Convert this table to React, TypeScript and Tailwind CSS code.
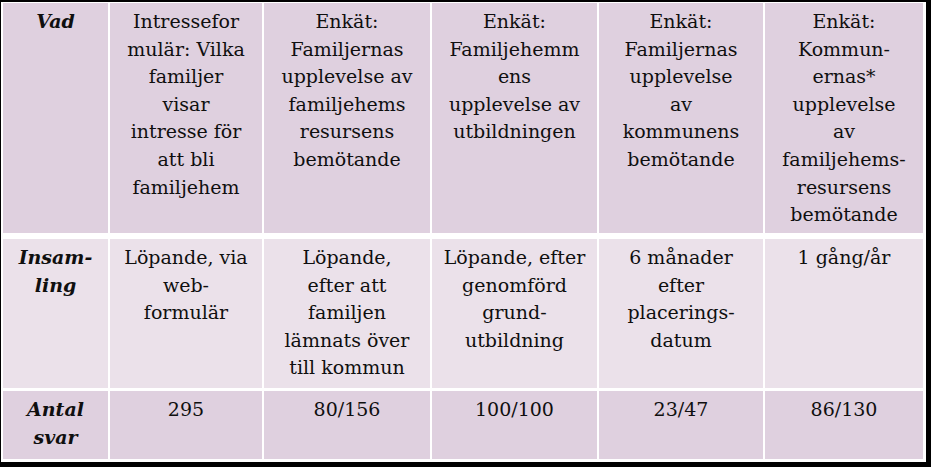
import React from 'react';

type Row = {
    bg: string;
    height: string;
    label: string[];
    cells: string[][];
};

const widths = ['w-[105px]', 'w-[152px]', 'w-[166px]', 'w-[165px]', 'w-[164px]', 'w-[158px]'];

const rows: Row[] = [
    {
        bg: 'bg-[#dfd0df]',
        height: 'h-[230px]',
        label: ['Vad'],
        cells: [
            ['Intressefor', 'mulär: Vilka', 'familjer', 'visar', 'intresse för', 'att bli', 'familjehem'],
            ['Enkät:', 'Familjernas', 'upplevelse av', 'familjehems', 'resursens', 'bemötande'],
            ['Enkät:', 'Familjehemm', 'ens', 'upplevelse av', 'utbildningen'],
            ['Enkät:', 'Familjernas', 'upplevelse', 'av', 'kommunens', 'bemötande'],
            ['Enkät:', 'Kommun-', 'ernas*', 'upplevelse', 'av', 'familjehems-', 'resursens', 'bemötande'],
        ],
    },
    {
        bg: 'bg-[#ebe1ea]',
        height: 'h-[149px]',
        label: ['Insam-', 'ling'],
        cells: [
            ['Löpande, via', 'web-', 'formulär'],
            ['Löpande,', 'efter att', 'familjen', 'lämnats över', 'till kommun'],
            ['Löpande, efter', 'genomförd', 'grund-', 'utbildning'],
            ['6 månader', 'efter', 'placerings-', 'datum'],
            ['1 gång/år'],
        ],
    },
    {
        bg: 'bg-[#dfd0df]',
        height: 'h-[68px]',
        label: ['Antal', 'svar'],
        cells: [['295'], ['80/156'], ['100/100'], ['23/47'], ['86/130']],
    },
];

const Lines: React.FC<{ lines: string[] }> = ({ lines }) => (
    <>
        {lines.map((l, i) => (
            <div key={i} className="whitespace-nowrap">{l}</div>
        ))}
    </>
);

const App: React.FC = () => {
    return (
        <div className="w-[931px] h-[467px] bg-black pt-[2px] pl-[1px] pr-[5px] pb-[5px] overflow-hidden">
            <div
                className="w-[925px] h-[460px] bg-white pt-[1px] pl-[2px] flex flex-col text-[#0f0f0f] text-[19px] leading-[27.6px]"
                style={{ fontFamily: '"DejaVu Serif", serif' }}
            >
                {rows.map((row, r) => (
                    <div key={r} className={`flex gap-[2px] ${row.height} ${r === 0 ? 'mb-[6px]' : r === 1 ? 'mb-[3px]' : ''}`}>
                        <div className={`${widths[0]} ${row.bg} pt-[5px] text-center font-bold italic`}>
                            <Lines lines={row.label} />
                        </div>
                        {row.cells.map((cell, c) => (
                            <div key={c} className={`${widths[c + 1]} ${row.bg} pt-[5px] text-center`}>
                                <Lines lines={cell} />
                            </div>
                        ))}
                    </div>
                ))}
            </div>
        </div>
    );
};

export default App;
